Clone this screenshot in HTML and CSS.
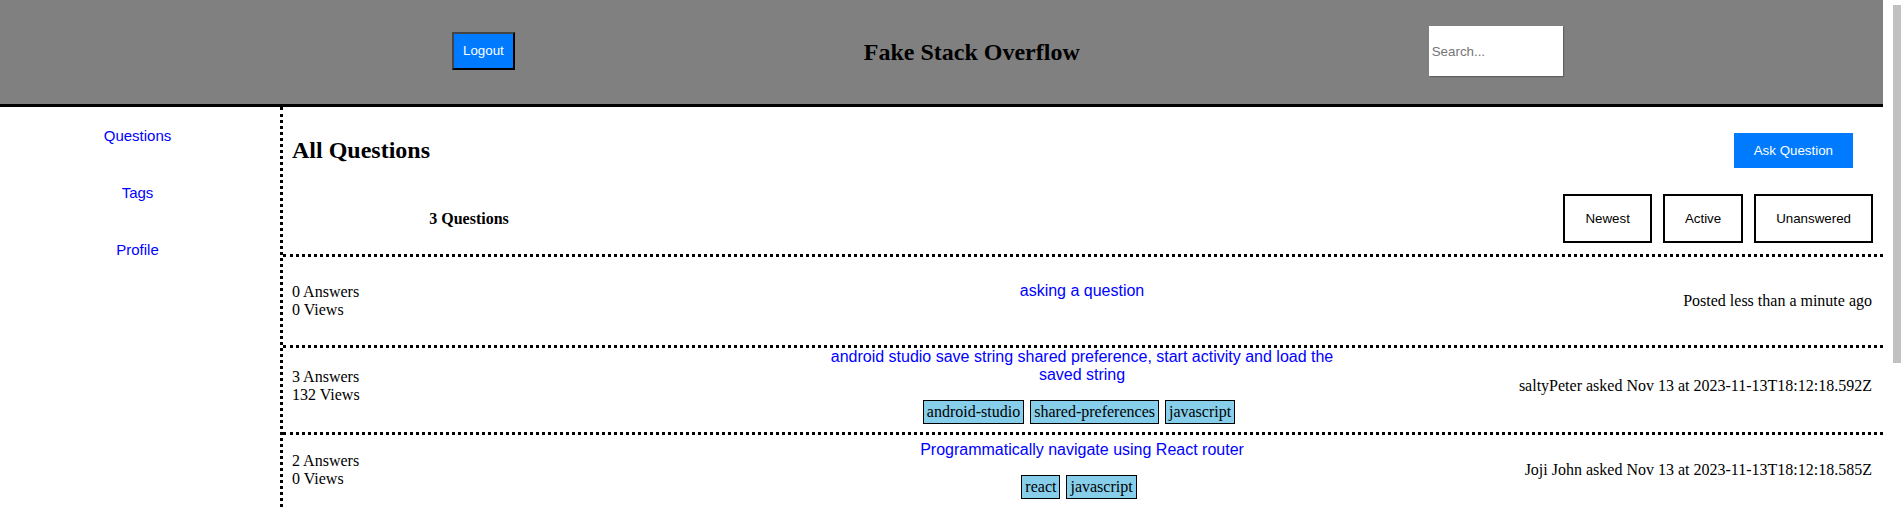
FILE: index.html
```html
<!DOCTYPE html>
<html lang="en">
<head>
<meta charset="utf-8">
<title>Fake Stack Overflow</title>
<link rel="stylesheet" href="styles.css">
</head>
<body>
<div class="viewport">
  <div class="page">
    <header class="topbar">
      <button class="btn-logout" type="button">Logout</button>
      <h1 class="site-title">Fake Stack Overflow</h1>
      <input class="search" type="text" placeholder="Search...">
    </header>
    <div class="layout">
      <nav class="sidebar">
        <a class="nav-link" href="#">Questions</a>
        <a class="nav-link" href="#">Tags</a>
        <a class="nav-link" href="#">Profile</a>
      </nav>
      <main class="content">
        <div class="content-head">
          <h2 class="page-title">All Questions</h2>
          <button class="btn-ask" type="button">Ask Question</button>
        </div>
        <div class="filter-bar">
          <div class="q-count">3 Questions</div>
          <div class="filters">
            <button class="btn-filter" type="button">Newest</button>
            <button class="btn-filter" type="button">Active</button>
            <button class="btn-filter" type="button">Unanswered</button>
          </div>
        </div>
        <div class="q-row q-row-new">
          <div class="q-stats"><div>0 Answers</div><div>0 Views</div></div>
          <div class="q-main">
            <a class="q-title" href="#">asking a question</a>
            <div class="q-tags"></div>
          </div>
          <div class="q-meta">Posted less than a minute ago</div>
        </div>
        <div class="q-row">
          <div class="q-stats"><div>3 Answers</div><div>132 Views</div></div>
          <div class="q-main">
            <a class="q-title" href="#">android studio save string shared preference, start activity and load the saved string</a>
            <div class="q-tags">
              <span class="tag">android-studio</span>
              <span class="tag">shared-preferences</span>
              <span class="tag">javascript</span>
            </div>
          </div>
          <div class="q-meta">saltyPeter asked Nov 13 at 2023-11-13T18:12:18.592Z</div>
        </div>
        <div class="q-row">
          <div class="q-stats"><div>2 Answers</div><div>0 Views</div></div>
          <div class="q-main">
            <a class="q-title" href="#">Programmatically navigate using React router</a>
            <div class="q-tags">
              <span class="tag">react</span>
              <span class="tag">javascript</span>
            </div>
          </div>
          <div class="q-meta">Joji John asked Nov 13 at 2023-11-13T18:12:18.585Z</div>
        </div>
      </main>
    </div>
  </div>
  <div class="scrollbar" aria-hidden="true">
    <div class="scrollbar-thumb"></div>
  </div>
</div>
</body>
</html>
```

FILE: styles.css
```css
html,
body {
  height: 100%;
}

body {
  margin: 0;
  overflow: hidden;
  font-family: "Liberation Serif", "Times New Roman", serif;
  font-size: 16px;
  color: #000;
  background: #fff;
}

/* window: page + vertical scrollbar */
.viewport {
  display: flex;
  height: 100%;
}

.page {
  flex: 1;
  min-width: 0;
  overflow: hidden;
}

.scrollbar {
  flex: none;
  width: 18px;
  background: #fff;
}

.scrollbar-thumb {
  width: 8px;
  height: 358px;
  margin: 5px 0 0 10px;
  background: #c1c1c1;
}

/* top bar */
.topbar {
  display: flex;
  align-items: center;
  gap: 349px;
  height: 104px;
  padding-left: 452px;
  background: #808080;
  border-bottom: 3px solid #000;
}

.btn-logout {
  font: 13.333px "Liberation Sans", Arial, sans-serif;
  color: #fff;
  background: #007bff;
  border: 2px solid;
  border-color: #444 #000 #000 #444;
  padding: 9px 9px 10px;
  margin-top: -2px;
}

.site-title {
  margin: 0;
  font-size: 24px;
  font-weight: bold;
}

.search {
  box-sizing: border-box;
  width: 134px;
  height: 50px;
  border: none;
  padding: 0 3px;
  margin-top: -2px;
  font: 13.333px "Liberation Sans", Arial, sans-serif;
  background: #fff;
  box-shadow: 1px 1px 1px rgba(0, 0, 0, 0.25);
}

.search::placeholder {
  color: #757575;
}

/* layout */
.layout {
  display: flex;
  min-height: 604px;
}

.sidebar {
  flex: none;
  width: 275px;
  padding-right: 5px;
  display: flex;
  flex-direction: column;
  align-items: center;
}

.nav-link {
  padding: 20px 0;
  font: 15px/17px "Liberation Sans", Arial, sans-serif;
  color: #0000ff;
  text-decoration: none;
}

.content {
  flex: 1;
  min-width: 0;
  border-left: 3px dotted #000;
}

.content-head {
  display: flex;
  justify-content: space-between;
  align-items: center;
  padding: 26px 30px 0 9px;
}

.page-title {
  margin: 0;
  font-size: 24px;
  font-weight: bold;
}

.btn-ask {
  font: 13.333px "Liberation Sans", Arial, sans-serif;
  color: #fff;
  background: #007bff;
  border: none;
  padding: 10px 20px;
}

.filter-bar {
  display: flex;
  justify-content: space-between;
  align-items: center;
  margin-top: 26px;
  padding: 0 10px 11px 9px;
  border-bottom: 3px dotted #000;
}

.q-count {
  width: 354px;
  text-align: center;
  font-weight: bold;
}

.filters {
  display: flex;
  gap: 11px;
}

.btn-filter {
  font: 13.333px "Liberation Sans", Arial, sans-serif;
  color: #000;
  background: #fff;
  border: 2px solid #000;
  padding: 15px 20px;
}

/* question rows */
.q-row {
  display: flex;
  align-items: center;
  min-height: 69px;
  padding: 0 11px 8px 9px;
  border-bottom: 3px dotted #000;
}

.q-row-new {
  min-height: 88px;
  padding-bottom: 0;
}

.q-stats,
.q-main,
.q-meta {
  flex: 1 1 0;
  min-width: 0;
}

.q-main {
  text-align: center;
}

.q-title {
  display: block;
  font: 16px "Liberation Sans", Arial, sans-serif;
  color: #0000ff;
  text-decoration: none;
}

.q-tags {
  display: flex;
  justify-content: center;
  margin-top: 16px;
}

.q-row-new .q-tags {
  margin-top: 20px;
}

.tag {
  margin-right: 6px;
  padding: 2px 3px;
  border: 1px solid #000;
  background: #87ceeb;
}

.q-meta {
  text-align: right;
}
```
